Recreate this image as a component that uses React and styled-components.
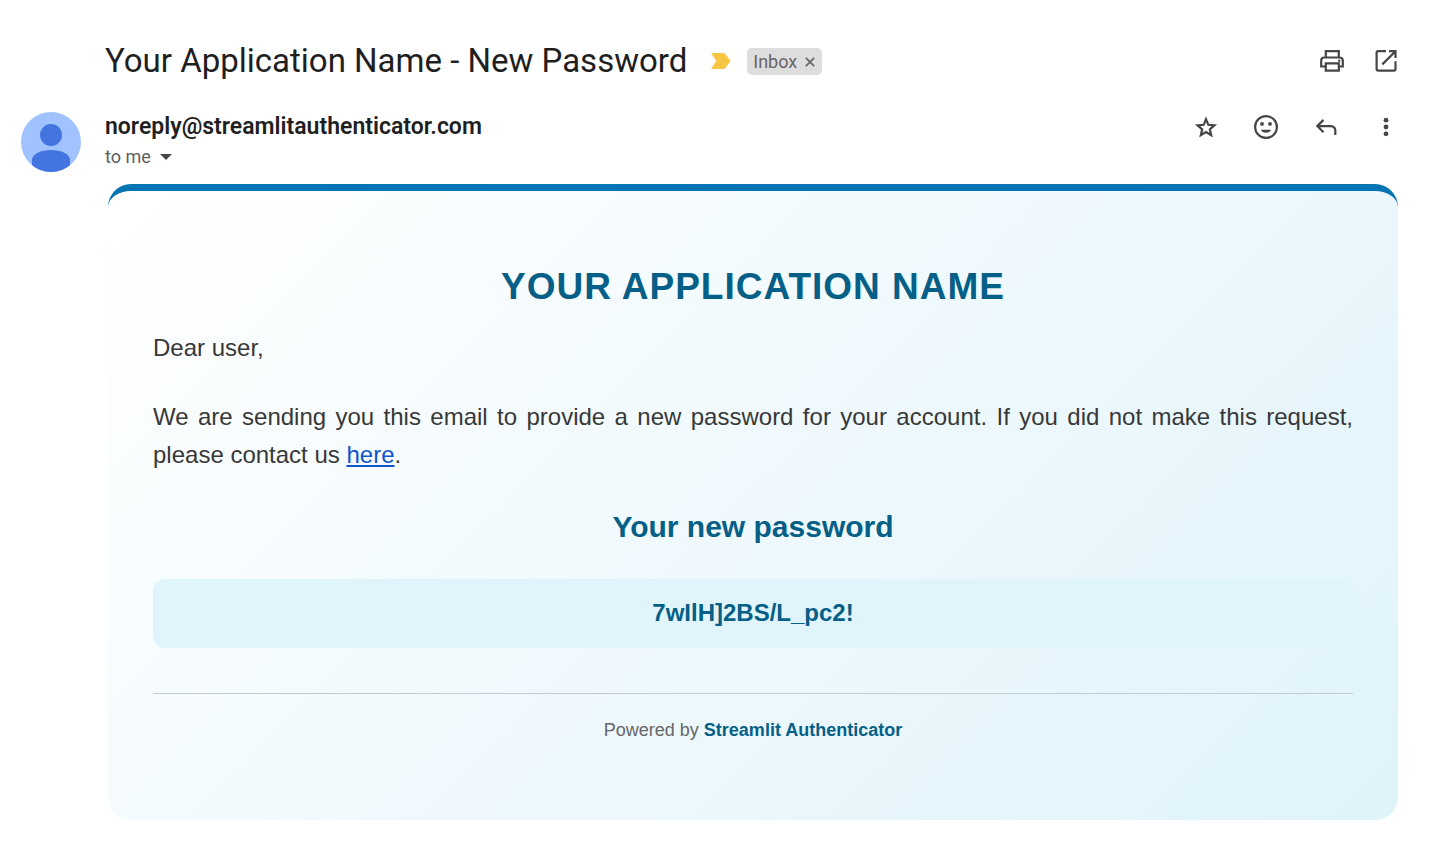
import React from "react";
import styled, { createGlobalStyle } from "styled-components";

const GlobalStyle = createGlobalStyle`
  *, *::before, *::after { box-sizing: border-box; }
  body { margin: 0; background: #fff; color: #1f1f1f; font-family: Roboto, "Liberation Sans", sans-serif; }
  h1, h2, h3, p { margin: 0; }
`;

const Page = styled.main`
  padding: 40px 33px 33px 21px;
`;

const SubjectBar = styled.header`
  display: flex;
  align-items: center;
  justify-content: space-between;
  padding-left: 84px;
  height: 42px;
`;

const SubjectGroup = styled.div`
  display: flex;
  align-items: center;
`;

const Subject = styled.h1`
  font-size: 33px;
  line-height: 42px;
  font-weight: 400;
`;

const MarkerButton = styled.button`
  display: flex;
  margin: 0 16px 0 24px;
  padding: 0;
  border: 0;
  background: none;
`;

const LabelChip = styled.span`
  display: flex;
  align-items: center;
  gap: 7px;
  height: 27px;
  padding: 0 6px;
  border-radius: 5px;
  background: #ddd;
  color: #666;
  font-size: 18px;
  line-height: 27px;
`;

const ChipClose = styled.button`
  display: flex;
  padding: 2px 0 0;
  border: 0;
  background: none;
  color: inherit;
`;

const Actions = styled.div`
  display: flex;
  gap: ${(p) => p.$gap}px;
  margin-right: -3px;
`;

const IconButton = styled.button`
  display: flex;
  width: 30px;
  height: 30px;
  padding: 0;
  border: 0;
  background: none;
  color: #444746;
`;

const SenderBar = styled.section`
  display: flex;
  align-items: flex-start;
  justify-content: space-between;
  padding-top: 30px;
`;

const Sender = styled.div`
  display: flex;
  gap: 24px;
`;

const SenderText = styled.div`
  display: flex;
  flex-direction: column;
  align-items: flex-start;
`;

const SenderAddress = styled.h2`
  font-size: 23px;
  line-height: 30px;
  font-weight: 600;
`;

const Recipient = styled.button`
  display: flex;
  align-items: center;
  gap: 9px;
  padding: 0;
  border: 0;
  background: none;
  color: #5e5e5e;
  font-family: inherit;
  font-size: 18px;
  line-height: 30px;
`;

const MailCard = styled.article`
  margin: 12px 0 0 87px;
  padding: 70px 45px 76px;
  border-top: 7px solid #0575b3;
  border-radius: 23px;
  background: linear-gradient(135deg, #ffffff, #dff3fb);
  color: #383838;
  font-family: "Liberation Sans", Arial, sans-serif;
  font-size: 24px;
  line-height: 38px;
`;

const AppName = styled.h2`
  color: #065f86;
  font-size: 37px;
  line-height: 52px;
  letter-spacing: 1px;
  text-align: center;
  text-transform: uppercase;
`;

const Paragraph = styled.p`
  margin-top: ${(p) => p.$top}px;
  text-align: justify;
`;

const ContactLink = styled.a`
  color: #1155cc;
`;

const PasswordTitle = styled.h3`
  margin-top: 30px;
  color: #065f86;
  font-size: 30px;
  line-height: 46px;
  text-align: center;
`;

const PasswordBox = styled.p`
  margin-top: 29px;
  padding: 15px 15px 16px;
  border-radius: 12px;
  background: #dff4fb;
  color: #065f86;
  font-weight: 700;
  text-align: center;
`;

const Footer = styled.footer`
  margin-top: 45px;
  padding-top: 22px;
  border-top: 1px solid #c3ccd1;
  color: #666;
  font-size: 18px;
  line-height: 28px;
  text-align: center;
`;

const BrandLink = styled.a`
  color: #065f86;
  font-weight: 700;
  text-decoration: none;
`;

const Icon = ({ children }) => (
  <svg width="30" height="30" viewBox="0 0 30 30" fill="none" stroke="currentColor" strokeWidth="2.2" aria-hidden="true">
    {children}
  </svg>
);

const PrintIcon = () => (
  <Icon>
    <path d="M8.8 11.5V5.2h13v6.300M8.500 20.500H4.200v-6a3 3 0 0 1 3-3h15.600a3 3 0 0 1 3 3v6h-4.300M8.800 17.400h13v7.200H8.800z" />
    <circle cx="22.2" cy="14.800" r="1.200" fill="currentColor" stroke="none" />
  </Icon>
);

const OpenIcon = () => (
  <Icon>
    <path d="M15 5.200H7.200a1.600 1.600 0 0 0-1.600 1.600v16.200a1.600 1.600 0 0 0 1.600 1.600h15.700a1.600 1.600 0 0 0 1.600-1.600V15.200M18 5.200h6.500v6.800M24.500 5.200L11.300 18.400" />
  </Icon>
);

const StarIcon = () => (
  <Icon>
    <path d="M15 7.200l2.300 5.600 6.100.5-4.600 4 1.400 6-5.200-3.200-5.200 3.200 1.400-6-4.600-4 6.100-.5z" />
  </Icon>
);

const SmileIcon = () => (
  <Icon>
    <circle cx="15" cy="15" r="10.900" />
    <circle cx="11" cy="11.900" r="1.900" fill="currentColor" stroke="none" />
    <circle cx="19" cy="11.900" r="1.900" fill="currentColor" stroke="none" />
    <path d="M9.800 17.800h10.400c-.9 1.900-2.800 3-5.200 3s-4.300-1.100-5.200-3z" fill="currentColor" stroke="none" />
  </Icon>
);

const ReplyIcon = () => (
  <Icon>
    <path d="M12.500 7.900L6.300 14.100l6.200 6.200M6.300 14.100h13.700a4.300 4.300 0 0 1 4.300 4.300V23" />
  </Icon>
);

const MoreIcon = () => (
  <Icon>
    <g fill="currentColor" stroke="none">
      <circle cx="15" cy="8.200" r="2.400" />
      <circle cx="15" cy="15" r="2.400" />
      <circle cx="15" cy="21.800" r="2.400" />
    </g>
  </Icon>
);

const Avatar = () => (
  <svg width="60" height="60" viewBox="0 0 60 60" role="img" aria-label="Sender">
    <defs>
      <clipPath id="avatar-disc"><circle cx="30" cy="30" r="30" /></clipPath>
    </defs>
    <g clipPath="url(#avatar-disc)">
      <rect width="60" height="60" fill="#a0c2ff" />
      <circle cx="30" cy="23" r="11" fill="#4374e0" />
      <path d="M11 60V48c0-6 9-10 19-10s19 4 19 10v12z" fill="#4374e0" />
    </g>
  </svg>
);

export default function App() {
  return (
    <>
      <GlobalStyle />
      <Page>
        <SubjectBar>
          <SubjectGroup>
            <Subject>Your Application Name - New Password</Subject>
            <MarkerButton aria-label="Important">
              <svg width="20" height="16" viewBox="0 0 20 16" aria-hidden="true">
                <path d="M0 0h12.500a2 2 0 0 1 1.600.800L19.600 8l-5.500 7.200a2 2 0 0 1-1.600.800H0l5.200-8z" fill="#f6c644" />
              </svg>
            </MarkerButton>
            <LabelChip>
              Inbox
              <ChipClose aria-label="Remove label">
                <svg width="12" height="12" viewBox="0 0 12 12" stroke="currentColor" strokeWidth="1.700" aria-hidden="true">
                  <path d="M1.800 1.800l8.400 8.400M10.200 1.800l-8.400 8.400" />
                </svg>
              </ChipClose>
            </LabelChip>
          </SubjectGroup>
          <Actions $gap={24}>
            <IconButton aria-label="Print"><PrintIcon /></IconButton>
            <IconButton aria-label="Open in new window"><OpenIcon /></IconButton>
          </Actions>
        </SubjectBar>

        <SenderBar>
          <Sender>
            <Avatar />
            <SenderText>
              <SenderAddress>noreply@streamlitauthenticator.com</SenderAddress>
              <Recipient>
                to me
                <svg width="12" height="6" viewBox="0 0 12 6" aria-hidden="true">
                  <path d="M0 0h12L6 6z" fill="#444746" />
                </svg>
              </Recipient>
            </SenderText>
          </Sender>
          <Actions $gap={30}>
            <IconButton aria-label="Star"><StarIcon /></IconButton>
            <IconButton aria-label="React"><SmileIcon /></IconButton>
            <IconButton aria-label="Reply"><ReplyIcon /></IconButton>
            <IconButton aria-label="More"><MoreIcon /></IconButton>
          </Actions>
        </SenderBar>

        <MailCard>
          <AppName>Your Application Name</AppName>
          <Paragraph $top={16}>Dear user,</Paragraph>
          <Paragraph $top={31}>
            We are sending you this email to provide a new password for your account. If you did not make this
            request, please contact us <ContactLink href="#contact">here</ContactLink>.
          </Paragraph>
          <PasswordTitle>Your new password</PasswordTitle>
          <PasswordBox>7wIlH]2BS/L_pc2!</PasswordBox>
          <Footer>
            Powered by <BrandLink href="#streamlit-authenticator">Streamlit Authenticator</BrandLink>
          </Footer>
        </MailCard>
      </Page>
    </>
  );
}
